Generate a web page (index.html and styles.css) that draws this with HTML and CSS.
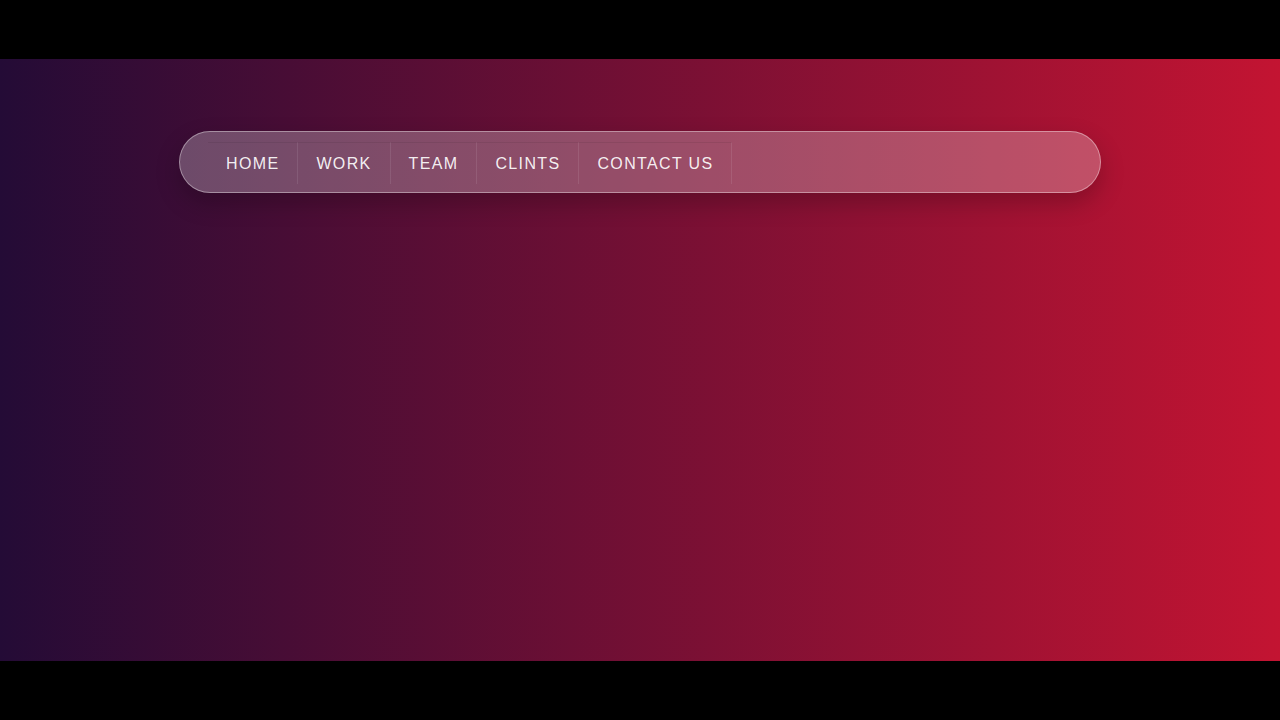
FILE: index.html
```html
<!DOCTYPE html>
<html lang="en">
<head>
  <meta charset="UTF-8" />
  <meta name="viewport" content="width=device-width, initial-scale=1.0"/>
  <title>Glass Navbar</title>
  <link rel="stylesheet" href="styles.css">
</head>
<body>

  <section class="stage">
    <nav class="navbar">
      <ul class="nav-links">
        <li><a href="#">Home</a></li>
        <li><a href="#">Work</a></li>
        <li><a href="#">Team</a></li>
        <li><a href="#">Clints</a></li>
        <li><a href="#">Contact us</a></li>
      </ul>
    </nav>
  </section>

</body>
</html>
```

FILE: styles.css
```css
* {
  box-sizing: border-box;
}

body {
  margin: 0;
  height: 720px;
  background: #000;
  display: flex;
  flex-direction: column;
  justify-content: center;
  font-family: 'Liberation Sans', Arial, Helvetica, sans-serif;
}

.stage {
  height: 602px;
  padding-top: 72px;
  background: linear-gradient(to right, #240b36, #c31432);
}

.navbar {
  width: 922px;
  height: 62px;
  margin: 0 auto;
  padding: 10px 28px 8px;
  border: 1px solid rgba(255, 255, 255, 0.38);
  border-radius: 31px;
  background: rgba(255, 255, 255, 0.26);
  box-shadow: 0 10px 25px rgba(0, 0, 0, 0.22);
}

.nav-links {
  display: flex;
  list-style: none;
  margin: 0;
  padding: 0;
}

.nav-links li {
  border-top: 1px solid rgba(0, 0, 0, 0.07);
  border-right: 1px solid rgba(255, 255, 255, 0.09);
}

.nav-links a {
  display: block;
  padding: 0 18px;
  line-height: 41px;
  font-size: 16px;
  letter-spacing: 1.35px;
  text-transform: uppercase;
  text-decoration: none;
  color: rgba(255, 255, 255, 0.92);
}
```
